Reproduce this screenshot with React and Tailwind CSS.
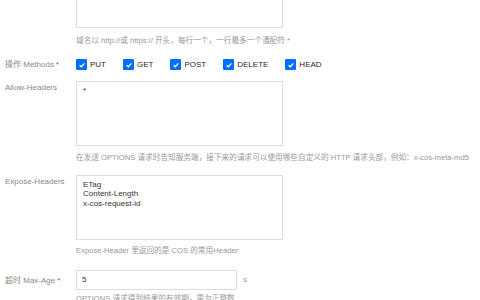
import React from "react";

const font = { fontFamily: '"Liberation Sans", Arial, "Noto Sans CJK SC", sans-serif' };

function Check({ label }) {
  return (
    <label className="flex items-center gap-[3px]">
      <span className="flex h-[11px] w-[11px] items-center justify-center rounded-[1px] bg-[#006eff]">
        <svg viewBox="0 0 10 10" className="h-[8px] w-[8px]">
          <path d="M2 5.2 L4.2 7.2 L8 3" fill="none" stroke="white" strokeWidth="1.6" />
        </svg>
      </span>
      <span className="text-[8px] text-[#000000e6] leading-none">{label}</span>
    </label>
  );
}

function Label({ children, req }) {
  return (
    <div className="text-[8px] leading-[11px] text-[#888]">
      {children}
      {req && <span className="ml-[2px] text-[#e54545]">*</span>}
    </div>
  );
}

function Help({ children, className = "" }) {
  return <div className={"text-[7.65px] leading-[11px] text-[#999] whitespace-nowrap " + className}>{children}</div>;
}

export default function App() {
  return (
    <div className="h-[300px] w-[480px] overflow-hidden bg-white" style={font}>
      <div className="grid grid-cols-[71px_1fr] pl-[5px]">
        <div />
        <div>
          <div className="-mt-[37px] h-[65px] w-[207px] border border-[#ddd] bg-white" />
          <Help className="mt-[7px]">域名以 http://或 https:// 开头，每行一个，一行最多一个通配符 *</Help>
        </div>

        <div className="mt-[13px]">
          <Label req>操作 Methods</Label>
        </div>
        <div className="mt-[13px] flex items-center gap-[17px]">
          <Check label="PUT" />
          <Check label="GET" />
          <Check label="POST" />
          <Check label="DELETE" />
          <Check label="HEAD" />
        </div>

        <div className="mt-[11px] pt-[1px]">
          <Label>Allow-Headers</Label>
        </div>
        <div className="mt-[11px]">
          <div className="h-[65px] w-[207px] border border-[#ddd] px-[6px] pt-[4px] text-[8px] leading-[9.5px] text-[#333]">*</div>
          <Help className="mt-[6px]">在发送 OPTIONS 请求时告知服务端，接下来的请求可以使用哪些自定义的 HTTP 请求头部，例如：x-cos-meta-md5</Help>
        </div>

        <div className="mt-[12px] pt-[1px]">
          <Label>Expose-Headers</Label>
        </div>
        <div className="mt-[12px]">
          <div className="h-[65px] w-[207px] border border-[#ddd] px-[6px] pt-[4px] text-[8px] leading-[9.3px] text-[#333]">
            <div>ETag</div>
            <div>Content-Length</div>
            <div>x-cos-request-id</div>
          </div>
          <Help className="mt-[5px]">Expose-Header 里返回的是 COS 的常用Header</Help>
        </div>

        <div className="mt-[14px] flex h-[20px] items-center">
          <Label req>超时 Max-Age</Label>
        </div>
        <div className="mt-[14px]">
          <div className="flex items-center gap-[6px]">
            <div className="flex h-[20px] w-[161px] items-center border border-[#ddd] px-[5px] text-[8px] text-[#333]">5</div>
            <span className="text-[8px] text-[#999]">s</span>
          </div>
          <Help className="mt-[3px]">OPTIONS 请求得到结果的有效期，需为正整数</Help>
        </div>
      </div>
    </div>
  );
}
